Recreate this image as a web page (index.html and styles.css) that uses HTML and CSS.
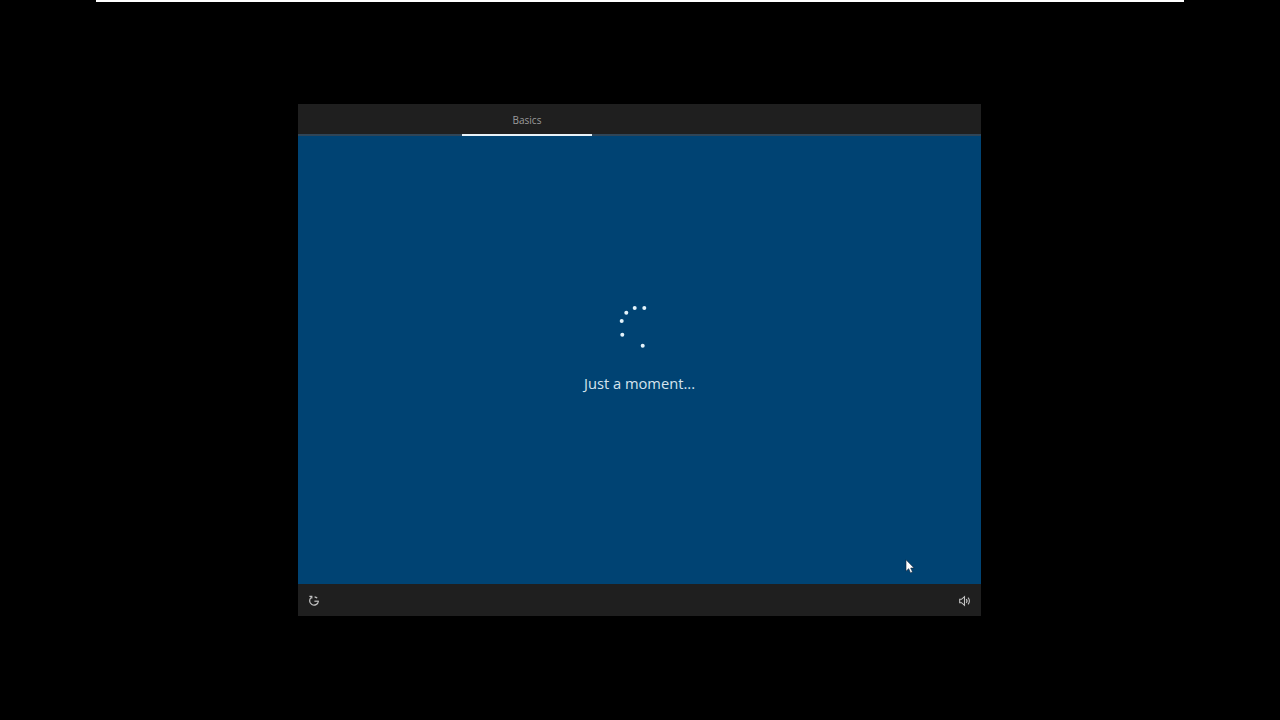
FILE: index.html
```html
<!DOCTYPE html>
<html lang="en">
<head>
    <meta charset="UTF-8">
    <meta name="viewport" content="width=device-width, initial-scale=1.0">
    <title>Just a moment...</title>
    <link rel="stylesheet" href="styles.css">
</head>
<body>

    <div class="top-line"></div>

    <div class="window">
        <div class="header">
            <div class="tab">Basics</div>
        </div>

        <div class="content">
            <svg class="spinner" width="44" height="46" viewBox="0 0 44 46">
                <circle cx="28.3" cy="4" r="2"/>
                <circle cx="18.7" cy="4" r="2"/>
                <circle cx="10.3" cy="8.7" r="2"/>
                <circle cx="5.7" cy="17" r="2"/>
                <circle cx="6.3" cy="30.7" r="2"/>
                <circle cx="26.7" cy="41.7" r="2"/>
            </svg>
            <p class="message">Just a moment...</p>

            <svg class="cursor" width="10" height="15" viewBox="0 0 10 15">
                <path d="M1 .8v11.4l2.7-2.5 1.8 4.2 2-.9-1.8-4h3.4z" fill="#fff" stroke="#10243a" stroke-width=".6"/>
            </svg>
        </div>

        <div class="footer">
            <svg class="icon" width="12" height="12" viewBox="0 0 12 12" fill="none" stroke="#c4c4c4" stroke-width="1.2">
                <path d="M3.4 2.2A4.4 4.4 0 1 0 10.4 6.2"/>
                <path d="M1.4 1.4h2.4v2.2"/>
                <path d="M6.4 6.2h4.4"/>
                <path d="M6.6 1.8a4.4 4.4 0 0 1 2.6 1.4"/>
            </svg>
            <svg class="icon" width="12" height="12" viewBox="0 0 12 12" fill="none" stroke="#c4c4c4" stroke-width="1.1">
                <path d="M.7 4.3h1.8L5.5 1.7v8.6L2.5 7.7H.7z"/>
                <path d="M7.2 4.2a2.6 2.6 0 0 1 0 3.6"/>
                <path d="M9 2.7a4.6 4.6 0 0 1 0 6.6"/>
            </svg>
        </div>
    </div>

</body>
</html>
```

FILE: styles.css
```css
body {
    font-family: 'Open Sans', 'Noto Sans', sans-serif;
    background-color: #000;
    margin: 0;
    padding: 0;
    height: 720px;
    overflow: hidden;
}

.top-line {
    height: 2px;
    margin: 0 96px;
    background-color: #fff;
}

.window {
    width: 683px;
    height: 512px;
    margin: 102px 0 0 298px;
    display: flex;
    flex-direction: column;
}

.header {
    height: 30px;
    padding-left: 164px;
    display: flex;
    background-color: #1f1f1f;
    border-bottom: 2px solid #2f4557;
}

.tab {
    width: 130px;
    height: 30px;
    margin-bottom: -2px;
    border-bottom: 2px solid #e8f2f8;
    text-align: center;
    font-size: 10px;
    line-height: 32px;
    color: #9c9c9c;
}

.content {
    position: relative;
    flex: 1;
    display: flex;
    flex-direction: column;
    align-items: center;
    padding-top: 168px;
    background-color: #004373;
}

.spinner {
    fill: #e4f3fb;
    margin-left: -4px;
}

.message {
    margin: 21px 0 0;
    font-size: 14.7px;
    line-height: 24px;
    color: #d5e3ee;
}

.cursor {
    position: absolute;
    left: 607px;
    top: 423px;
}

.footer {
    height: 32px;
    padding: 2px 10px 0 10px;
    box-sizing: border-box;
    display: flex;
    justify-content: space-between;
    align-items: center;
    background-color: #1f1f1f;
}
```
